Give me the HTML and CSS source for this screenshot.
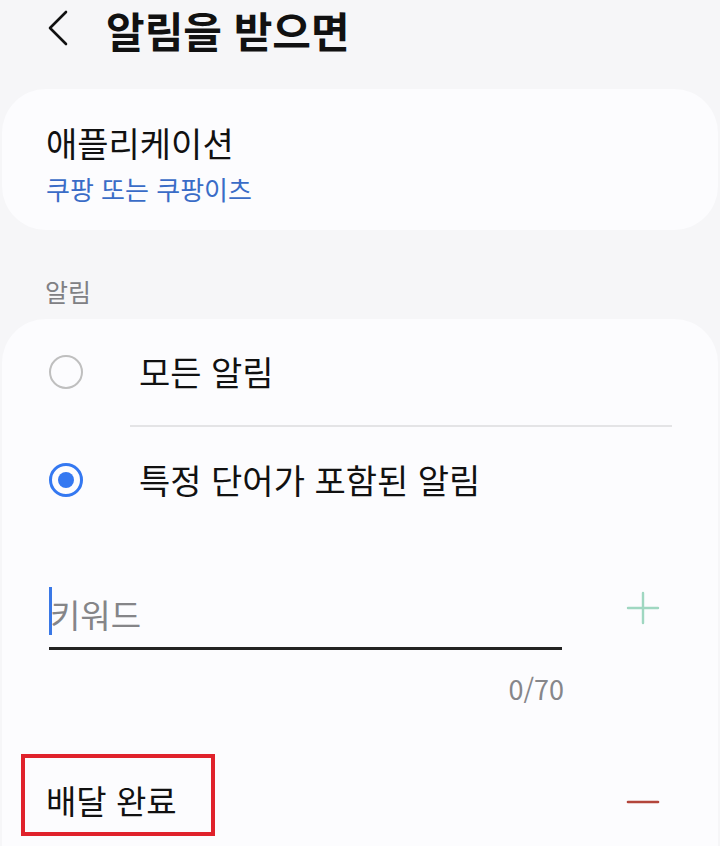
FILE: index.html
```html
<!DOCTYPE html>
<html lang="ko">
<head>
    <meta charset="UTF-8">
    <meta name="viewport" content="width=device-width, initial-scale=1.0">
    <title>알림을 받으면</title>
    <link rel="stylesheet" href="styles.css">
</head>
<body>
    <div class="header">
        <svg class="back" width="22" height="36" viewBox="0 0 22 36">
            <path d="M19 2 L3 18 L19 34" fill="none" stroke="#111" stroke-width="2.6" stroke-linecap="round" stroke-linejoin="round"/>
        </svg>
        <h1>알림을 받으면</h1>
    </div>

    <div class="card app-card">
        <div class="app-title">애플리케이션</div>
        <div class="app-sub">쿠팡 또는 쿠팡이츠</div>
    </div>

    <div class="section-label">알림</div>

    <div class="card notify-card">
        <div class="option">
            <span class="radio"></span>
            <span class="option-text">모든 알림</span>
        </div>
        <div class="divider"></div>
        <div class="option">
            <span class="radio checked"></span>
            <span class="option-text">특정 단어가 포함된 알림</span>
        </div>

        <div class="keyword-row">
            <div class="keyword-input">
                <span class="cursor"></span>
                <span class="placeholder">키워드</span>
            </div>
            <svg class="icon-btn plus" width="34" height="34" viewBox="0 0 34 34">
                <path d="M17 2 V32 M2 17 H32" stroke="#9fd7c1" stroke-width="2.4" stroke-linecap="round"/>
            </svg>
        </div>
        <div class="counter">0/70</div>

        <div class="keyword-item">
            <span class="keyword-label">배달 완료</span>
            <svg class="icon-btn minus" width="34" height="34" viewBox="0 0 34 34">
                <path d="M2 17 H32" stroke="#b3453b" stroke-width="2.6" stroke-linecap="round"/>
            </svg>
        </div>
    </div>
</body>
</html>
```

FILE: styles.css
```css
body {
    margin: 0;
    padding: 0;
    height: 846px;
    overflow: hidden;
    background-color: #f6f6f8;
    font-family: "Noto Sans CJK KR", "Noto Sans", sans-serif;
    color: #111;
}

.header {
    display: flex;
    align-items: center;
    height: 60px;
    padding-left: 47px;
}

.back {
    margin-top: -4px;
}

h1 {
    margin: 0 0 0 37px;
    font-size: 42px;
    font-weight: 700;
    line-height: 60px;
}

.card {
    margin: 0 2px;
    background-color: #fcfcfe;
    border-radius: 44px;
}

/* 애플리케이션 카드 */
.app-card {
    margin-top: 29px;
    height: 141px;
    padding: 32px 0 0 44px;
    box-sizing: border-box;
}

.app-title {
    font-size: 34px;
    line-height: 44px;
}

.app-sub {
    font-size: 26px;
    line-height: 32px;
    margin-top: 8px;
    color: #3a6cc7;
}

.section-label {
    padding-left: 45px;
    margin-top: 46px;
    font-size: 25px;
    line-height: 30px;
    color: #808084;
}

/* 알림 카드 */
.notify-card {
    margin-top: 13px;
    border-radius: 44px 44px 0 0;
    padding: 0 46px 10px 46px;
}

.option {
    display: flex;
    align-items: center;
    height: 106px;
}

.radio {
    width: 30px;
    height: 30px;
    border: 2.5px solid #bfbfbf;
    border-radius: 50%;
    margin-left: 1px;
    position: relative;
}

.radio.checked {
    width: 28px;
    height: 28px;
    border: 3.5px solid #3478f1;
}

.radio.checked::after {
    content: "";
    position: absolute;
    left: 6px;
    top: 6px;
    width: 16px;
    height: 16px;
    border-radius: 50%;
    background-color: #3478f1;
}

.option-text {
    margin-left: 56px;
    font-size: 34px;
    line-height: 44px;
}

.divider {
    margin-left: 82px;
    height: 2px;
    background-color: #e4e4e6;
}

.keyword-row {
    display: flex;
    align-items: center;
    justify-content: space-between;
    margin-top: 54px;
}

.keyword-input {
    display: flex;
    align-items: center;
    width: 513px;
    margin-left: 1px;
    height: 60px;
    border-bottom: 3px solid #232323;
}

.cursor {
    width: 3px;
    height: 48px;
    background-color: #3a78e6;
    margin-top: -12px;
}

.placeholder {
    margin-left: -2px;
    margin-top: -6px;
    font-size: 33px;
    line-height: 44px;
    color: #858588;
}

.icon-btn {
    margin-right: 12px;
}

.icon-btn.plus {
    margin-top: -22px;
}

.counter {
    width: 516px;
    text-align: right;
    margin-top: 24px;
    font-size: 27px;
    line-height: 30px;
    color: #86868a;
}

.keyword-item {
    display: flex;
    align-items: center;
    justify-content: space-between;
    margin-top: 50px;
    margin-left: -27px;
}

/* 빨간 강조 박스 */
.keyword-label {
    border: 4px solid #e0222b;
    padding: 22px 34px 12px 21px;
    font-size: 33px;
    line-height: 40px;
}

.icon-btn.minus {
    margin-top: 14px;
}
```
